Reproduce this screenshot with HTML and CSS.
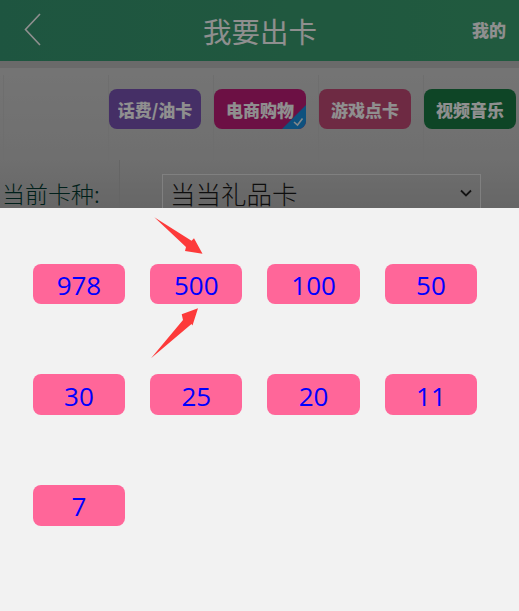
FILE: index.html
```html
<!DOCTYPE html>
<html lang="zh">
<head>
<meta charset="utf-8">
<title>我要出卡</title>
<link rel="stylesheet" href="styles.css">
</head>
<body>
<div class="page">
  <header class="topbar">
    <svg class="back" width="18" height="33" viewBox="0 0 18 33"><path d="M16 1 L1.5 16.5 L16 32" fill="none" stroke="#fff" stroke-width="1.6"/></svg>
    <h1 class="title">我要出卡</h1>
    <span class="mine">我的</span>
  </header>
  <div class="strip"></div>
  <nav class="cats">
    <div class="cat-cell"></div>
    <div class="cat-cell"><a class="cat purple">话费/油卡</a></div>
    <div class="cat-cell"><a class="cat magenta">电商购物<svg class="tick" width="24" height="24" viewBox="0 0 24 24"><polygon points="24,0 24,24 0,24" fill="#1a90e0"/><path d="M12 17 L15.5 20 L20.5 13.5" fill="none" stroke="#e8f2f8" stroke-width="1.6"/></svg></a></div>
    <div class="cat-cell"><a class="cat rose">游戏点卡</a></div>
    <div class="cat-cell"><a class="cat green">视频音乐</a></div>
  </nav>
  <div class="form-row">
    <label class="form-label">当前卡种:</label>
    <div class="select">当当礼品卡<svg class="chev" width="12" height="8" viewBox="0 0 12 8"><path d="M1 1.5 L6 6.5 L11 1.5" fill="none" stroke="#222" stroke-width="1.8"/></svg></div>
  </div>
</div>
<div class="mask"></div>
<section class="sheet">
  <div class="grid">
    <button class="amt">978</button>
    <button class="amt">500</button>
    <button class="amt">100</button>
    <button class="amt">50</button>
    <button class="amt">30</button>
    <button class="amt">25</button>
    <button class="amt">20</button>
    <button class="amt">11</button>
    <button class="amt">7</button>
  </div>
</section>
<svg class="arrows" width="519" height="611" viewBox="0 0 519 611">
  <polygon fill="#fd3a3a" points="154.3,217.3 191.5,240.8 194,238.3 202.5,253.7 185,251 186,247"/>
  <polygon fill="#fd3a3a" points="151,358.3 183,320 181.7,314.3 198,308.3 192.5,325.5 191.5,324"/>
</svg>
</body>
</html>
```
FILE: styles.css
```css
* { box-sizing: border-box; }
html, body { margin: 0; padding: 0; height: 100%; overflow: hidden; }
body { font-family: "Noto Sans", "Noto Sans CJK SC", sans-serif; position: relative; }
.page { height: 100%; background: linear-gradient(180deg, #cfcfcf 0, #cfcfcf 75px, #c6c6c6 160px, #b6b6b6 208px); }
.topbar { height: 61px; background: linear-gradient(90deg, #379872, #3ba170); display: flex; align-items: center; justify-content: center; position: relative; }
.title { margin: 0 0 0 1px; font-size: 28.5px; font-weight: 400; color: #fff; font-family: "Noto Sans CJK SC", sans-serif; line-height: 61px; }
.back { position: absolute; left: 24px; top: 13px; }
.mine { position: absolute; right: 13px; top: 18px; font-size: 17px; font-weight: 900; color: #fff; font-family: "Noto Sans CJK SC", sans-serif; line-height: 24px; }
.strip { height: 7px; background: #bdbdbd; }
.cats { display: flex; height: 92px; padding: 7px 0 0 3px; }
.cat-cell { flex: none; width: 105px; display: flex; padding-top: 14px; border-left: 1px solid #c4c4c4; }
.cat { position: relative; overflow: hidden; display: block; width: 92px; height: 40px; border-radius: 8px; color: #fff; font-size: 17px; font-weight: 900; line-height: 42px; text-align: center; white-space: nowrap; font-family: "Noto Sans CJK SC", sans-serif; }
.purple { background: #7b54b6; }
.magenta { background: #c11e79; }
.rose { background: #c44b78; }
.green { background: #197b44; }
.tick { position: absolute; right: 0; bottom: 0; }
.form-row { display: flex; align-items: flex-start; height: 60px; }
.form-label { flex: none; width: 120px; height: 48px; padding: 15px 0 0 2px; border-right: 1px solid #b4b4b4; font-size: 23px; font-weight: 300; line-height: 36px; color: #003a30; white-space: nowrap; font-family: "Noto Sans CJK SC", sans-serif; }
.select { flex: none; width: 319px; height: 44px; margin: 14px 0 0 42px; border: 1px solid #e5e5e5; padding-left: 7px; font-size: 25.5px; font-weight: 300; line-height: 36px; color: #1a1a1a; position: relative; font-family: "Noto Sans CJK SC", sans-serif; }
.chev { position: absolute; right: 8px; top: 14px; }
.mask { position: absolute; inset: 0; background: rgba(0, 0, 0, 0.44); }
.sheet { position: absolute; left: 0; right: 0; top: 208px; bottom: 0; background: #f2f2f2; }
.grid { display: grid; grid-template-columns: repeat(4, 92.3px); column-gap: 25.03px; grid-auto-rows: 40.6px; row-gap: 70px; padding: 55.8px 0 0 32.8px; }
.amt { border: 0; padding: 2px 0 0; border-radius: 8px; background: #ff6699; color: #0000ff; font-family: "Open Sans", sans-serif; font-size: 26px; line-height: 38px; text-align: center; }
.arrows { position: absolute; left: 0; top: 0; pointer-events: none; }
```
